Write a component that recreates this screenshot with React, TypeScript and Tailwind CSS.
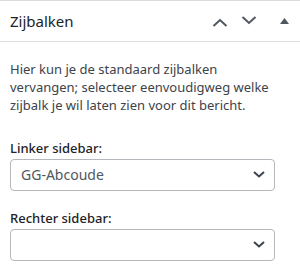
import React from "react";

function Chevron({ dir }: { dir: "up" | "down" }) {
  return (
    <svg width="16" height="9" viewBox="0 0 16 9" className="text-[#50575e]">
      {dir === "up" ? (
        <path d="M1.5 8 L8 2 L14.5 8" fill="none" stroke="currentColor" strokeWidth="2" />
      ) : (
        <path d="M1.5 1 L8 7 L14.5 1" fill="none" stroke="currentColor" strokeWidth="2" />
      )}
    </svg>
  );
}

function SelectBox({ value }: { value: string }) {
  return (
    <div className="flex h-[32px] w-[265px] items-center justify-between rounded-[4px] border border-[#b4b7bb] bg-white pl-[10px] pr-[9px]">
      <span className="text-[14px] text-[#50575e]">{value}</span>
      <svg width="12" height="7" viewBox="0 0 12 7">
        <path d="M1 1 L6 5.5 L11 1" fill="none" stroke="#3c434a" strokeWidth="2" />
      </svg>
    </div>
  );
}

export default function App() {
  return (
    <div className="min-h-[276px] w-[300px] bg-white font-['Noto_Sans',sans-serif]">
      {/* paneel kop */}
      <div className="flex h-[42px] items-center justify-between border-y border-[#dcdcde] pl-[10px] pr-[11px]">
        <h2 className="text-[15px] font-normal leading-[24px] text-[#1d2327]">Zijbalken</h2>
        <div className="flex items-center">
          <span className="mt-[3px] mr-[13px]"><Chevron dir="up" /></span>
          <span className="mt-[-1px] mr-[23px]"><Chevron dir="down" /></span>
          <svg width="9" height="6" viewBox="0 0 9 6" className="mt-[-1px]">
            <path d="M0 6 L4.5 0 L9 6 Z" fill="#50575e" />
          </svg>
        </div>
      </div>

      {/* inhoud */}
      <div className="px-[10px] pt-[18px]">
        <p className="w-[270px] text-[13px] leading-[18.2px] text-[#3c434a]">
          Hier kun je de standaard zijbalken vervangen; selecteer eenvoudigweg welke zijbalk je wil laten zien voor dit bericht.
        </p>

        <label className="mt-[24px] mb-[2px] block text-[13px] font-medium leading-[18px] text-[#1d2327]">
          Linker sidebar:
        </label>
        <SelectBox value="GG-Abcoude" />

        <label className="mt-[18px] mb-[2px] block text-[13px] font-medium leading-[18px] text-[#1d2327]">
          Rechter sidebar:
        </label>
        <SelectBox value="" />
      </div>
    </div>
  );
}
